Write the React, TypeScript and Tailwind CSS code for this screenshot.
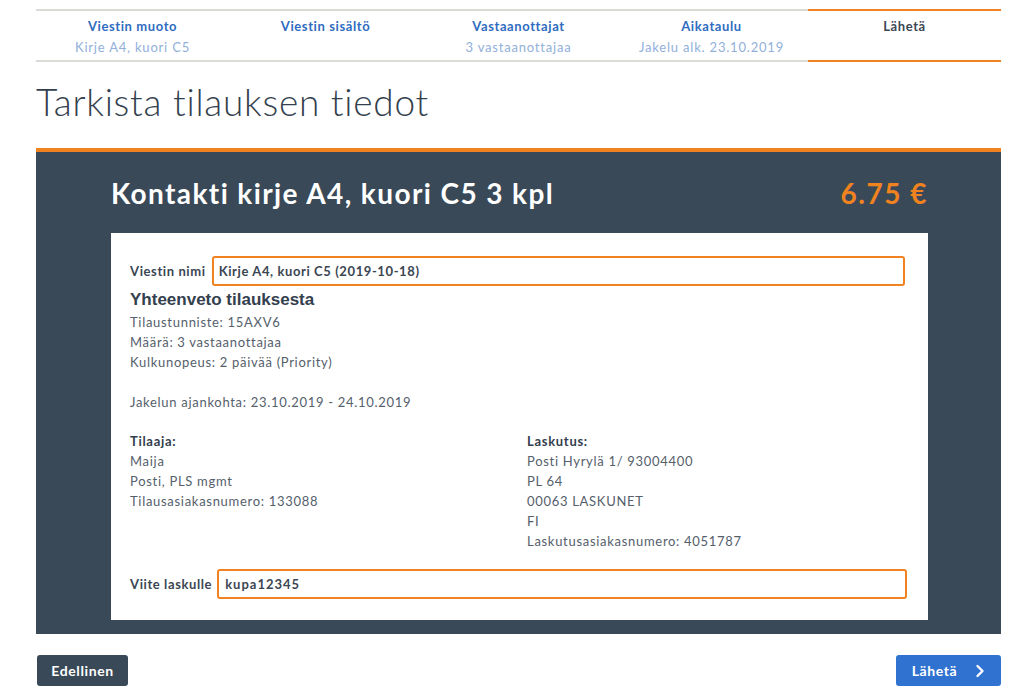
import React from 'react';

const steps = [
  { title: 'Viestin muoto', sub: 'Kirje A4, kuori C5' },
  { title: 'Viestin sisältö', sub: '' },
  { title: 'Vastaanottajat', sub: '3 vastaanottajaa' },
  { title: 'Aikataulu', sub: 'Jakelu alk. 23.10.2019' },
  { title: 'Lähetä', sub: '', active: true },
];

const font = { fontFamily: 'Lato, "Open Sans", sans-serif' };

const App: React.FC = () => {
  return (
    <div className="w-[1024px] h-[688px] overflow-hidden bg-white text-[#3b4653]" style={font}>
      <div className="ml-[36px] pt-[9px] w-[965px]">
        {/* stepper */}
        <div className="grid grid-cols-5">
          {steps.map((s) =>
            s.active ? (
              <div key={s.title} className="h-[53px] border-t-2 border-b-2 border-[#f08220] text-center pt-[6px]">
                <div className="text-[13px] font-bold text-[#3b4653] tracking-[0.6px]">{s.title}</div>
              </div>
            ) : (
              <div key={s.title} className="h-[53px] border-t-2 border-b-2 border-[#dcdad5] text-center pt-[6px]">
                <div className="text-[13px] font-bold text-[#2f6cc0] tracking-[0.6px]">{s.title}</div>
                {s.sub && <div className="text-[13px] text-[#91b0da] mt-[1px] tracking-[0.8px]">{s.sub}</div>}
              </div>
            )
          )}
        </div>

        <h1 className="mt-[17px] text-[37px] font-light leading-[46px] text-[#33404d] tracking-[0.75px]">Tarkista tilauksen tiedot</h1>

        {/* main panel */}
        <div className="mt-[23px] border-t-4 border-[#f08220] bg-[#394957] pl-[75px] pr-[73px] pb-[14px]">
          <div className="flex items-center justify-between h-[81px]">
            <div className="text-[28px] font-bold text-white tracking-[1.4px]">Kontakti kirje A4, kuori C5 3 kpl</div>
            <div className="text-[28px] font-bold text-[#f08220] tracking-[1.5px]">6.75 €</div>
          </div>

          <div className="bg-white px-[19px] pt-[23px] pb-[21px] text-[13px] leading-[20px] text-[#55606b] tracking-[0.7px]">
            <div className="flex items-center gap-[6px] pr-[4px]">
              <span className="font-bold text-[#3b4653] whitespace-nowrap tracking-[0.6px]">Viestin nimi</span>
              <div className="flex-1 h-[30px] border-2 border-[#f08220] rounded-[3px] flex items-center px-[5px] font-bold text-[#3b4653] tracking-[0.6px]">
                Kirje A4, kuori C5 (2019-10-18)
              </div>
            </div>

            <div
              className="mt-[3px] text-[17px] leading-[22px] font-bold text-[#33404d] tracking-normal"
              style={{ fontFamily: '"Liberation Sans", Arial, sans-serif' }}
            >
              Yhteenveto tilauksesta
            </div>
            <div className="mt-[1px]">
              <div>Tilaustunniste: 15AXV6</div>
              <div>Määrä: 3 vastaanottajaa</div>
              <div>Kulkunopeus: 2 päivää (Priority)</div>
              <div className="mt-[20px]">Jakelun ajankohta: 23.10.2019 - 24.10.2019</div>
            </div>

            <div className="grid grid-cols-[397px_1fr] mt-[19px]">
              <div>
                <div className="font-bold text-[#33404d]">Tilaaja:</div>
                <div>Maija</div>
                <div>Posti, PLS mgmt</div>
                <div>Tilausasiakasnumero: 133088</div>
              </div>
              <div>
                <div className="font-bold text-[#33404d]">Laskutus:</div>
                <div>Posti Hyrylä 1/ 93004400</div>
                <div>PL 64</div>
                <div>00063 LASKUNET</div>
                <div>FI</div>
                <div>Laskutusasiakasnumero: 4051787</div>
              </div>
            </div>

            <div className="flex items-center gap-[5px] mt-[18px] pr-[2px]">
              <span className="font-bold text-[#3b4653] whitespace-nowrap tracking-[0.6px]">Viite laskulle</span>
              <div className="flex-1 h-[30px] border-2 border-[#f08220] rounded-[3px] flex items-center px-[6px] font-bold text-[#3b4653] tracking-[1px]">
                kupa12345
              </div>
            </div>
          </div>
        </div>

        {/* buttons */}
        <div className="flex justify-between mt-[21px]">
          <button className="h-[31px] w-[91px] ml-[1px] rounded-[3px] bg-[#394957] text-white text-[14px] font-bold tracking-[0.6px]">
            Edellinen
          </button>
          <button className="h-[31px] w-[105px] rounded-[3px] bg-[#2f72d0] text-white text-[14px] font-bold tracking-[0.6px] flex items-center justify-center gap-[18px]">
            Lähetä
            <svg width="10" height="14" viewBox="0 0 10 14" fill="none">
              <path d="M2.5 2 L7.5 7 L2.5 12" stroke="white" strokeWidth="2.4" strokeLinecap="round" strokeLinejoin="round" />
            </svg>
          </button>
        </div>
      </div>
    </div>
  );
};

export default App;
